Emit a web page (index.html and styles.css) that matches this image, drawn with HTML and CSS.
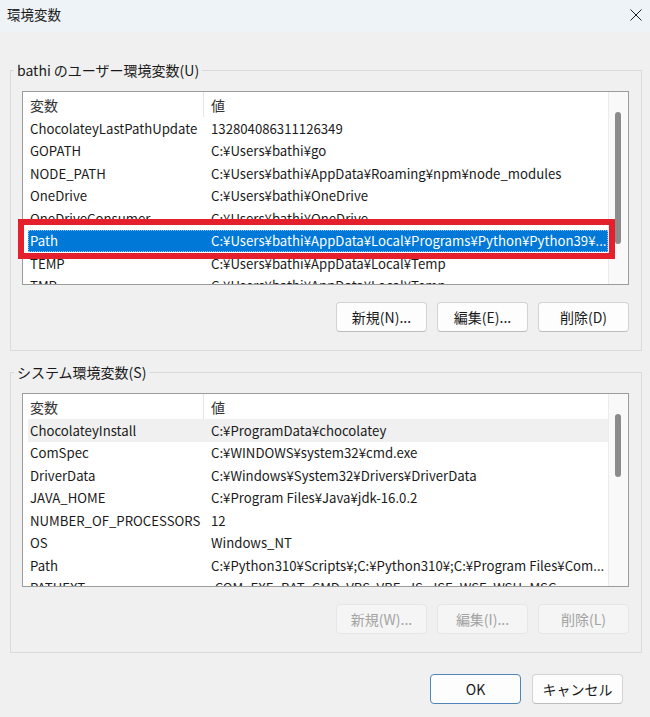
FILE: index.html
```html
<!DOCTYPE html>
<html lang="ja">
<head>
<meta charset="utf-8">
<title>環境変数</title>
<link rel="stylesheet" href="styles.css">
</head>
<body>
<div class="titlebar">
  <span class="title">環境変数</span>
  <svg class="close" width="12" height="12" viewBox="0 0 12 12"><path d="M0.5 0.5L11.5 11.5M11.5 0.5L0.5 11.5" stroke="#1f1f1f" stroke-width="1" fill="none"/></svg>
</div>
<div class="content">
  <fieldset class="group">
    <legend>bathi のユーザー環境変数(U)</legend>
    <div class="list-wrap">
      <div class="list">
        <div class="list-main">
          <div class="row head"><div>変数</div><div>値</div></div>
          <div class="row"><div>ChocolateyLastPathUpdate</div><div>132804086311126349</div></div>
          <div class="row"><div>GOPATH</div><div>C:¥Users¥bathi¥go</div></div>
          <div class="row"><div>NODE_PATH</div><div>C:¥Users¥bathi¥AppData¥Roaming¥npm¥node_modules</div></div>
          <div class="row"><div>OneDrive</div><div>C:¥Users¥bathi¥OneDrive</div></div>
          <div class="row"><div>OneDriveConsumer</div><div>C:¥Users¥bathi¥OneDrive</div></div>
          <div class="row sel"><div>Path</div><div>C:¥Users¥bathi¥AppData¥Local¥Programs¥Python¥Python39¥...</div></div>
          <div class="row"><div>TEMP</div><div>C:¥Users¥bathi¥AppData¥Local¥Temp</div></div>
          <div class="row"><div>TMP</div><div>C:¥Users¥bathi¥AppData¥Local¥Temp</div></div>
        </div>
        <div class="scroll"><div class="thumb thumb-user"></div></div>
      </div>
      <div class="callout"></div>
    </div>
    <div class="btns">
      <button type="button">新規(N)...</button>
      <button type="button">編集(E)...</button>
      <button type="button">削除(D)</button>
    </div>
  </fieldset>

  <fieldset class="group">
    <legend>システム環境変数(S)</legend>
    <div class="list-wrap">
      <div class="list">
        <div class="list-main">
          <div class="row head"><div>変数</div><div>値</div></div>
          <div class="row hot"><div>ChocolateyInstall</div><div>C:¥ProgramData¥chocolatey</div></div>
          <div class="row"><div>ComSpec</div><div>C:¥WINDOWS¥system32¥cmd.exe</div></div>
          <div class="row"><div>DriverData</div><div>C:¥Windows¥System32¥Drivers¥DriverData</div></div>
          <div class="row"><div>JAVA_HOME</div><div>C:¥Program Files¥Java¥jdk-16.0.2</div></div>
          <div class="row"><div>NUMBER_OF_PROCESSORS</div><div>12</div></div>
          <div class="row"><div>OS</div><div>Windows_NT</div></div>
          <div class="row"><div>Path</div><div>C:¥Python310¥Scripts¥;C:¥Python310¥;C:¥Program Files¥Com...</div></div>
          <div class="row"><div>PATHEXT</div><div>.COM;.EXE;.BAT;.CMD;.VBS;.VBE;.JS;.JSE;.WSF;.WSH;.MSC</div></div>
        </div>
        <div class="scroll"><div class="thumb thumb-sys"></div></div>
      </div>
    </div>
    <div class="btns">
      <button type="button" disabled>新規(W)...</button>
      <button type="button" disabled>編集(I)...</button>
      <button type="button" disabled>削除(L)</button>
    </div>
  </fieldset>

  <div class="dialog-btns">
    <button type="button" class="default">OK</button>
    <button type="button">キャンセル</button>
  </div>
</div>
</body>
</html>
```

FILE: styles.css
```css
* {
  box-sizing: border-box;
}

html, body {
  margin: 0;
  padding: 0;
}

body {
  width: 650px;
  height: 717px;
  overflow: hidden;
  background: #f0f0f0;
  font-family: "Noto Sans CJK JP", "Noto Sans", sans-serif;
  font-size: 14px;
  color: #1a1a1a;
}

.titlebar {
  height: 32px;
  background: #eef3f8;
  display: flex;
  align-items: center;
  justify-content: space-between;
  padding: 0 8px 3px 7px;
}

.title {
  font-size: 13.5px;
  line-height: 1;
}

.close {
  display: block;
}

.content {
  padding: 29px 8px 0 10px;
}

.group {
  margin: 0;
  min-width: 0;
  border: 1px solid #dadada;
  padding: 12px 12px 18px 3px;
}

.group + .group {
  margin-top: 12px;
}

.group legend {
  padding: 0 3px;
  line-height: 18px;
  font-size: 14px;
}

.list-wrap {
  position: relative;
  margin-left: 8px;
}

.list {
  height: 194px;
  border: 1px solid #9c9c9c;
  background: #fff;
  display: flex;
  overflow: hidden;
}

.list-main {
  flex: 1;
  min-width: 0;
  padding-left: 5px;
}

.row {
  display: grid;
  grid-template-columns: 176px 1fr;
  height: 22.5px;
  align-items: center;
  white-space: nowrap;
  font-size: 13.2px;
}

.row > div {
  overflow: hidden;
  padding-left: 2px;
}

.row > div + div {
  padding-left: 7px;
}

.row.head {
  height: 25px;
  align-items: stretch;
  color: #333;
  font-size: 14px;
}

.row.head > div {
  display: flex;
  align-items: center;
}

.row.head > div:first-child {
  border-right: 1px solid #e5e5e5;
}

.row.sel {
  background: #0078d7;
  color: #fff;
  outline: 1px dotted rgba(255, 255, 255, 0.55);
  outline-offset: -1px;
}

.row.hot {
  background: #f0f0f0;
}

.scroll {
  width: 20px;
  background: #f9f9f9;
  border-left: 1px solid #ececec;
  padding-top: 20px;
}

.thumb {
  width: 6px;
  margin-left: 6px;
  border-radius: 3px;
  background: #8b8b8b;
}

.thumb-user {
  height: 132px;
}

.thumb-sys {
  height: 63px;
}

.callout {
  position: absolute;
  left: -4px;
  top: 128px;
  width: 597px;
  height: 40px;
  border: 6px solid #e3202b;
}

.btns {
  display: flex;
  justify-content: flex-end;
  gap: 10px;
  margin-top: 17px;
}

button {
  width: 91px;
  height: 30px;
  padding: 0;
  font: inherit;
  font-size: 14px;
  color: #1a1a1a;
  background: #fdfdfd;
  border: 1px solid #d3d3d3;
  border-bottom-color: #bdbdbd;
  border-radius: 4px;
}

button:disabled {
  background: #f5f5f5;
  border-color: #e6e6e6;
  color: #a3a3a3;
}

.dialog-btns {
  display: flex;
  justify-content: flex-end;
  gap: 11px;
  margin-top: 21px;
  padding-right: 19px;
}

button.default {
  border-color: #4f86b8;
}
```
